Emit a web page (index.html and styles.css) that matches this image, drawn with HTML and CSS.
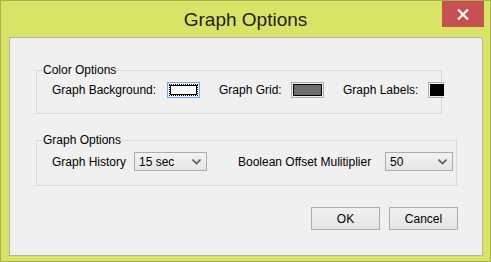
FILE: index.html
```html
<!DOCTYPE html>
<html>
<head>
<meta charset="utf-8">
<link rel="stylesheet" href="styles.css">
</head>
<body>
<div class="window">
  <div class="titlebar">
    <div class="title">Graph Options</div>
    <div class="close">
      <svg width="12" height="11" viewBox="0 0 12 11"><path d="M1 0.5 L11 10.5 M11 0.5 L1 10.5" stroke="#fff" stroke-width="2.2" fill="none"/></svg>
    </div>
  </div>
  <div class="client">
    <fieldset class="group group-color">
      <legend>Color Options</legend>
      <div class="row row-color">
        <span class="lbl lbl-bg">Graph Background:</span>
        <span class="swatch swatch-focus"><span class="swatch-fill fill-white"></span></span>
        <span class="lbl lbl-grid">Graph Grid:</span>
        <span class="swatch"><span class="swatch-fill fill-gray"></span></span>
        <span class="lbl lbl-labels">Graph Labels:</span>
        <span class="swatch swatch-cut"><span class="swatch-fill fill-black"></span></span>
      </div>
    </fieldset>
    <fieldset class="group group-graph">
      <legend>Graph Options</legend>
      <div class="row row-graph">
        <span class="lbl lbl-hist">Graph History</span>
        <span class="combo combo-hist"><span class="combo-text">15 sec</span>
          <svg class="chev" width="9" height="6" viewBox="0 0 9 6"><path d="M0.5 0.5 L4.5 4.5 L8.5 0.5" stroke="#5a5a5a" stroke-width="1.6" fill="none"/></svg>
        </span>
        <span class="lbl lbl-bool">Boolean Offset Mulitiplier</span>
        <span class="combo combo-bool"><span class="combo-text">50</span>
          <svg class="chev" width="9" height="6" viewBox="0 0 9 6"><path d="M0.5 0.5 L4.5 4.5 L8.5 0.5" stroke="#5a5a5a" stroke-width="1.6" fill="none"/></svg>
        </span>
      </div>
    </fieldset>
    <div class="buttons">
      <button class="btn">OK</button>
      <button class="btn">Cancel</button>
    </div>
  </div>
</div>
</body>
</html>
```
FILE: styles.css
```css
html, body {
  margin: 0;
  padding: 0;
  background: #d9e366;
}
.window {
  box-sizing: border-box;
  width: 491px;
  height: 262px;
  border: 1px solid #a9b04e;
  background: #d9e366;
  display: flex;
  flex-direction: column;
  font-family: "Liberation Sans", Arial, sans-serif;
  font-size: 12px;
  color: #000;
}
.titlebar {
  height: 36px;
  display: grid;
  grid-template-columns: 1fr auto 1fr;
  flex-shrink: 0;
}
.title {
  grid-column: 2;
  font-size: 19px;
  line-height: 36px;
  padding-top: 1px;
  color: #222;
  white-space: nowrap;
}
.close {
  grid-column: 3;
  justify-self: end;
  align-self: start;
  width: 42px;
  height: 26px;
  margin-right: 6px;
  background: #c75050;
  display: flex;
  align-items: center;
  justify-content: center;
}
.close svg { display: block; margin-top: 1px; }
.client {
  box-sizing: border-box;
  height: 219px;
  margin: 0 7px 0 8px;
  border: 1px solid #b2b49a;
  background: #f0f0f0;
  padding: 24px 24px 0 26px;
  display: flex;
  flex-direction: column;
  align-items: flex-start;
}
.group {
  box-sizing: border-box;
  margin: 0;
  padding: 0;
  min-width: 0;
  border: 1px solid #d8d8d8;
}
.group-color { width: 406px; }
.group-graph { width: 421px; margin-top: 18px; }
.group legend {
  margin-left: 5px;
  padding: 0 1px;
  line-height: 16px;
  font-size: 12px;
}
.row {
  display: flex;
  align-items: center;
  padding-left: 15px;
}
.row-color { padding-top: 4px; padding-bottom: 15px; height: 16px; }
.row-graph { padding-top: 4px; padding-bottom: 14px; height: 19px; }
.lbl {
  flex-shrink: 0;
  white-space: nowrap;
  line-height: 16px;
}
.lbl-bg { width: 115px; }
.lbl-grid { width: 72px; margin-left: 19px; }
.lbl-labels { width: 85px; margin-left: 19px; }
.lbl-hist { width: 82px; }
.lbl-bool { width: 147px; margin-left: 31px; }
.swatch {
  box-sizing: border-box;
  flex-shrink: 0;
  width: 33px;
  height: 16px;
  border: 1px solid #adadad;
  padding: 1px;
  display: flex;
}
.swatch-focus { border-color: #6fa8e6; }
.swatch-cut { width: 16px; border-right: 0; padding-right: 0; }
.swatch-fill {
  flex: 1;
  box-sizing: border-box;
}
.fill-white {
  background: #fff;
  border: 1px dotted #000;
  box-shadow: inset 0 0 0 1px #000;
}
.fill-gray {
  background: #6d6d6d;
  border: 1px solid #000;
}
.fill-black {
  background: #000;
}
.combo {
  box-sizing: border-box;
  flex-shrink: 0;
  height: 19px;
  border: 1px solid #acacac;
  background: linear-gradient(#f2f2f2, #e6e6e6);
  display: flex;
  align-items: center;
  justify-content: space-between;
  padding: 0 5px 0 4px;
}
.combo-hist { width: 73px; }
.combo-bool { width: 68px; }
.combo-text { line-height: 16px; }
.chev { display: block; }
.buttons {
  align-self: stretch;
  display: flex;
  justify-content: flex-end;
  gap: 9px;
  margin-top: 21px;
}
.btn {
  box-sizing: border-box;
  width: 69px;
  height: 23px;
  border: 1px solid #acacac;
  background: linear-gradient(#f0f0f0, #e5e5e5);
  font-family: "Liberation Sans", Arial, sans-serif;
  font-size: 12px;
  color: #000;
  padding: 0;
  margin: 0;
}
```
